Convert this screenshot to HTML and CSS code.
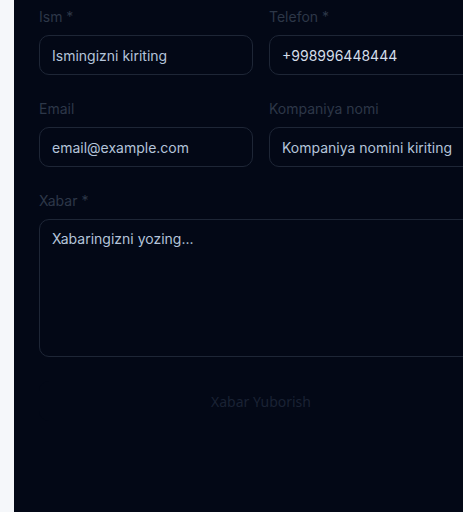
FILE: index.html
```html
<!DOCTYPE html>
<html lang="uz">
<head>
<meta charset="utf-8">
<link rel="stylesheet" href="styles.css">
</head>
<body>
<div class="page">
  <aside class="strip"></aside>
  <main class="panel">
    <form class="form">
      <div class="grid">
        <div class="field">
          <label class="label">Ism *</label>
          <div class="input">Ismingizni kiriting</div>
        </div>
        <div class="field">
          <label class="label">Telefon *</label>
          <div class="input value">+998996448444</div>
        </div>
        <div class="field">
          <label class="label">Email</label>
          <div class="input">email@example.com</div>
        </div>
        <div class="field">
          <label class="label">Kompaniya nomi</label>
          <div class="input">Kompaniya nomini kiriting</div>
        </div>
        <div class="field full">
          <label class="label">Xabar *</label>
          <div class="input textarea">Xabaringizni yozing...</div>
        </div>
      </div>
      <button type="button" class="submit">Xabar Yuborish</button>
    </form>
  </main>
</div>
</body>
</html>
```
FILE: styles.css
```css
html, body {
  margin: 0;
  padding: 0;
  overflow: hidden;
  background: #030816;
}
.page {
  display: flex;
  width: 100%;
  height: 512px;
}
.strip {
  width: 14px;
  flex: none;
  background: #f5f7fa;
}
.panel {
  flex: 1;
  min-width: 0;
  overflow: hidden;
  background: #030816;
  padding: 7px 0 0 25px;
}
.form {
  width: 444px;
  display: flex;
  flex-direction: column;
  gap: 24px;
  font-family: Inter, "Noto Sans", sans-serif;
}
.grid {
  display: grid;
  grid-template-columns: 1fr 1fr;
  column-gap: 16px;
  row-gap: 24px;
}
.field {
  display: flex;
  flex-direction: column;
  gap: 8px;
}
.full {
  grid-column: 1 / -1;
}
.label {
  font-size: 14px;
  line-height: 20px;
  color: #2d3748;
}
.input {
  box-sizing: border-box;
  height: 40px;
  border: 1px solid #1e2636;
  border-radius: 10px;
  padding: 0 12px;
  display: flex;
  align-items: center;
  font-size: 14px;
  color: #b4c4da;
  white-space: nowrap;
}
.value {
  color: #d4dde9;
}
.textarea {
  height: 138px;
  align-items: flex-start;
  padding-top: 9px;
  line-height: 20px;
}
.submit {
  height: 40px;
  border: none;
  border-radius: 10px;
  background: #030816;
  color: #1a2234;
  font-family: "Noto Sans", Inter, sans-serif;
  font-size: 14px;
  cursor: pointer;
}
```
